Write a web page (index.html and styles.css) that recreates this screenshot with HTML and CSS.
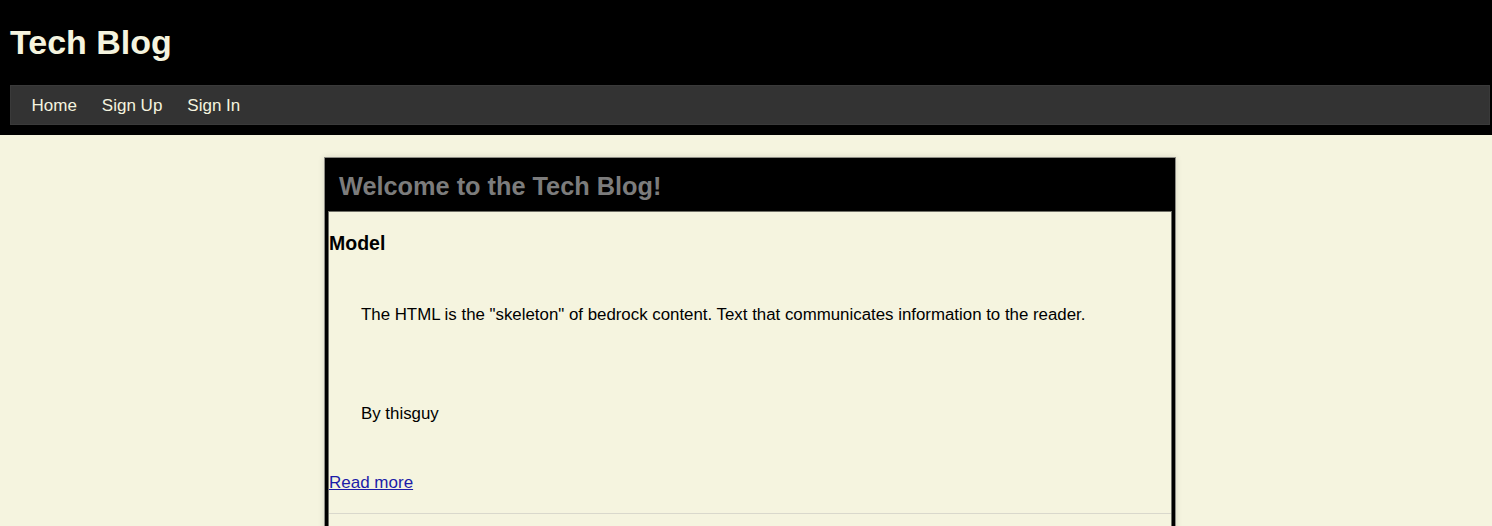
FILE: index.html
```html
<!DOCTYPE html>
<html lang="en">
<head>
<meta charset="utf-8">
<title>Tech Blog</title>
<link rel="stylesheet" href="styles.css">
</head>
<body>
<header class="site-header">
  <h1 class="site-title">Tech Blog</h1>
  <nav class="site-nav">
    <a class="nav-link" href="#">Home</a>
    <a class="nav-link" href="#">Sign Up</a>
    <a class="nav-link" href="#">Sign In</a>
  </nav>
</header>
<main class="main">
  <section class="card">
    <h2 class="card-title">Welcome to the Tech Blog!</h2>
    <div class="card-body">
      <article class="post">
        <h3 class="post-title">Model</h3>
        <p class="post-text">The HTML is the "skeleton" of bedrock content. Text that communicates information to the reader.</p>
        <p class="post-author">By thisguy</p>
        <a class="post-link" href="#">Read more</a>
      </article>
    </div>
  </section>
</main>
</body>
</html>
```
FILE: styles.css
```css
html, body {
  margin: 0;
  padding: 0;
}
body {
  background: #f5f4df;
  font-family: "Liberation Sans", Arial, sans-serif;
  color: #000;
  overflow: hidden;
}
.site-header {
  background: #000;
  padding: 23px 2px 10px 10px;
}
.site-title {
  margin: 0;
  font-size: 34px;
  line-height: 39px;
  font-weight: bold;
  color: #f5f4df;
}
.site-nav {
  margin-top: 23px;
  height: 40px;
  box-sizing: border-box;
  background: #333;
  border: 1px solid #3a3a3a;
  display: flex;
  align-items: center;
  padding: 2px 0 0 8px;
}
.nav-link {
  color: #f5f4df;
  text-decoration: none;
  font-size: 17px;
  padding: 0 12.5px;
}
.main {
  display: flex;
  justify-content: center;
  padding-left: 8px;
  padding-top: 22px;
}
.card {
  width: 852px;
  box-sizing: border-box;
  background: #000;
  border: 1px solid #8c8c84;
  padding: 0 3px;
  box-shadow: 0 0 6px rgba(0, 0, 0, 0.12);
}
.card-title {
  margin: 0;
  height: 53px;
  line-height: 56px;
  padding-left: 11px;
  font-size: 25.3px;
  font-weight: bold;
  color: #7c7c7c;
}
.card-body {
  background: #f5f4df;
  border: 1px solid #6e6e66;
  min-height: 400px;
}
.post {
  border-bottom: 1px solid #d9d8cc;
  padding-bottom: 20px;
}
.post-title {
  margin: 20px 0 0;
  font-size: 19.5px;
  line-height: 22px;
  font-weight: bold;
}
.post-text {
  margin: 51px 0 0;
  padding-left: 32px;
  font-size: 16.85px;
  line-height: 20px;
}
.post-author {
  margin: 79px 0 0;
  padding-left: 32px;
  font-size: 16.85px;
  line-height: 20px;
}
.post-link {
  display: inline-block;
  margin-top: 49px;
  font-size: 17px;
  line-height: 20px;
  color: #1c1ca8;
}
```
